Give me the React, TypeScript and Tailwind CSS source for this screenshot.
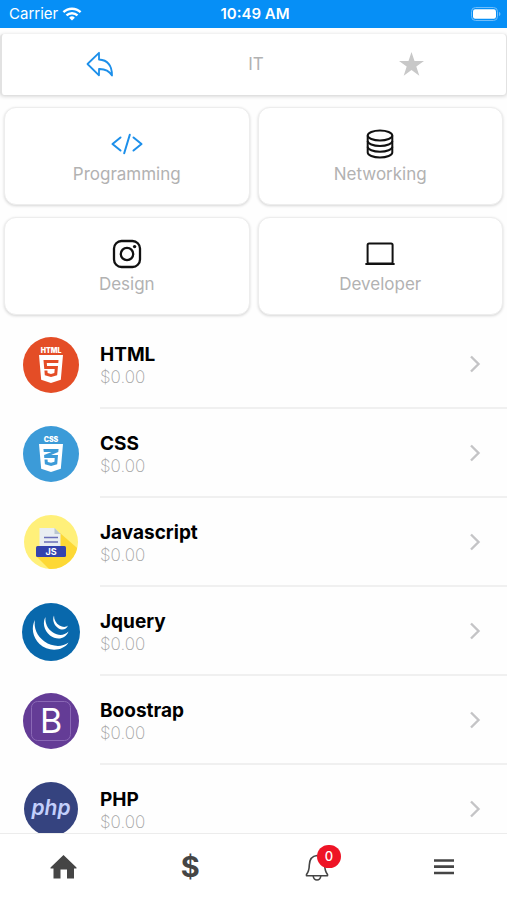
import React from 'react'
import { FaCss3Alt, FaHtml5 } from 'react-icons/fa'

const LOGO_FONT = 'Inter, sans-serif'

function WifiIcon() {
  return (
    <svg viewBox="0 0 20 14" className="w-5 h-3.5" fill="none" stroke="currentColor" strokeWidth="2.4" aria-hidden="true">
      <path d="M1.4 5.2a12.4 12.4 0 0 1 17.2 0" />
      <path d="M4.5 8.4a8 8 0 0 1 11 0" />
      <path d="M10 13.6 7.1 10.7a4.2 4.2 0 0 1 5.8 0Z" fill="currentColor" stroke="none" />
    </svg>
  )
}

function BatteryIcon() {
  return (
    <svg viewBox="0 0 30 14" className="w-[30px] h-3.5" aria-hidden="true">
      <rect x="0.5" y="0.5" width="26" height="13" rx="4" fill="none" stroke="#6fbdfa" />
      <rect x="2" y="2.2" width="23" height="9.600" rx="2.2" fill="#fff" />
      <path d="M28 5v4c1-.4 1.400-1.100 1.400-2s-.4-1.600-1.400-2Z" fill="#6fbdfa" />
    </svg>
  )
}

function CodeIcon() {
  return (
    <svg viewBox="0 0 32 32" className="size-8" fill="none" stroke="#1c8fea" strokeWidth="2" strokeLinecap="round" strokeLinejoin="round" aria-hidden="true">
      <path d="m9.500 9.500-8 6.500 8 6.500" />
      <path d="m22.500 9.500 8 6.500-8 6.500" />
      <path d="m18.800 6.800-5.600 18.400" />
    </svg>
  )
}

function DatabaseIcon() {
  return (
    <svg viewBox="0 0 32 32" className="size-8" fill="none" stroke="#111" strokeWidth="2" aria-hidden="true">
      <ellipse cx="16" cy="7.500" rx="12.300" ry="5" />
      <path d="M3.700 7.500v17c0 2.800 5.500 5 12.300 5s12.300-2.200 12.300-5v-17" />
      <path d="M3.700 13c0 2.800 5.500 5 12.300 5s12.300-2.200 12.300-5" />
      <path d="M3.700 18.700c0 2.800 5.500 5 12.300 5s12.300-2.200 12.300-5" />
    </svg>
  )
}

function CameraIcon() {
  return (
    <svg viewBox="0 0 32 32" className="size-8" fill="none" stroke="#111" strokeWidth="2.300" aria-hidden="true">
      <rect x="3" y="3" width="26" height="26" rx="7.500" />
      <circle cx="16" cy="16" r="6.200" />
      <circle cx="23.600" cy="8.600" r="1.700" fill="#111" stroke="none" />
    </svg>
  )
}

function LaptopIcon() {
  return (
    <svg viewBox="0 0 32 32" className="size-8" fill="none" stroke="#111" strokeWidth="2" strokeLinecap="round" aria-hidden="true">
      <rect x="3.600" y="5.500" width="25" height="20" rx="1.500" />
      <path d="M2.200 26h27.600" strokeWidth="2.200" />
    </svg>
  )
}

function HtmlLogo() {
  return (
    <svg viewBox="0 0 58 58" className="size-[58px]" aria-hidden="true">
      <circle cx="29" cy="29" r="28" fill="#e44d26" />
      <text x="29" y="17" textAnchor="middle" fontFamily={LOGO_FONT} fontWeight="900" fontSize="7" fill="#fff">
        HTML
      </text>
      <FaHtml5 x="13" y="17" size={32} color="#fff" />
    </svg>
  )
}

function CssLogo() {
  return (
    <svg viewBox="0 0 58 58" className="size-[58px]" aria-hidden="true">
      <circle cx="29" cy="29" r="28" fill="#3c9bd8" />
      <text x="29" y="17" textAnchor="middle" fontFamily={LOGO_FONT} fontWeight="900" fontSize="7" fill="#fff">
        CSS
      </text>
      <FaCss3Alt x="13" y="17" size={32} color="#fff" />
    </svg>
  )
}

function JavascriptLogo() {
  return (
    <svg viewBox="0 0 58 58" className="size-[58px]" aria-hidden="true">
      <clipPath id="js-disc">
        <circle cx="29" cy="28" r="27" />
      </clipPath>
      <g clipPath="url(#js-disc)">
        <rect width="58" height="58" fill="#fff07a" />
        <path d="M38 19 62 40v20H32L14 42Z" fill="#fdd835" />
      </g>
      <path d="M17.500 14h15l6 6v14h-21Z" fill="#e9eef2" />
      <path d="m32.500 14 6 6h-6Z" fill="#b9c6cf" />
      <path d="M22 23.500h14M22 28h14" stroke="#6a6fb8" strokeWidth="1.600" />
      <rect x="14" y="32" width="30" height="11" rx="1.500" fill="#3443ae" />
      <text x="29" y="41" textAnchor="middle" fontFamily={LOGO_FONT} fontWeight="700" fontSize="9" fill="#fff">
        JS
      </text>
    </svg>
  )
}

function JqueryLogo() {
  return (
    <svg viewBox="0 0 58 58" className="size-[58px]" aria-hidden="true">
      <circle cx="29" cy="29" r="29" fill="#0868ac" />
      <g fill="#fff">
        <path d="M13 17C9 24 10.500 34 17.500 41C26 49 41 48.500 46.500 39.500C40 44.500 30 43.800 22.500 38.500C15 33 11.500 25 13 17Z" />
        <path d="M23.500 14C20.500 19 21.500 27 28 32.500C34.500 37.500 43.500 36.500 46.500 28.500C42 33 36 32.800 31 29.500C25.500 26 22.800 20 23.500 14Z" />
        <path d="M32 12.500C30 17 32 22 36 25C40 27.800 44.500 26.500 46 22.500C43.500 24.600 40.500 24.200 37.500 22.500C34 20.300 32 17 32 12.500Z" />
      </g>
    </svg>
  )
}

function BootstrapLogo() {
  return (
    <svg viewBox="0 0 58 58" className="size-[58px]" aria-hidden="true">
      <circle cx="29" cy="29" r="28" fill="#643c96" />
      <rect x="9.500" y="9.500" width="39" height="39" rx="6" fill="none" stroke="#8a68b5" />
      <text x="29" y="41" textAnchor="middle" fontFamily={LOGO_FONT} fontWeight="400" fontSize="34" fill="#fff">
        B
      </text>
    </svg>
  )
}

function PhpLogo() {
  return (
    <svg viewBox="0 0 58 58" className="size-[58px]" aria-hidden="true">
      <circle cx="29" cy="28" r="27" fill="#35437f" />
      <text x="29" y="34" textAnchor="middle" fontFamily={LOGO_FONT} fontWeight="600" fontStyle="italic" fontSize="21" fill="#c3cffb">
        php
      </text>
    </svg>
  )
}

const categories = [
  { label: 'Programming', icon: <CodeIcon /> },
  { label: 'Networking', icon: <DatabaseIcon /> },
  { label: 'Design', icon: <CameraIcon /> },
  { label: 'Developer', icon: <LaptopIcon /> },
]

const courses = [
  { name: 'HTML', price: '$0.00', logo: <HtmlLogo /> },
  { name: 'CSS', price: '$0.00', logo: <CssLogo /> },
  { name: 'Javascript', price: '$0.00', logo: <JavascriptLogo /> },
  { name: 'Jquery', price: '$0.00', logo: <JqueryLogo /> },
  { name: 'Boostrap', price: '$0.00', logo: <BootstrapLogo /> },
  { name: 'PHP', price: '$0.00', logo: <PhpLogo /> },
]

function StatusBar() {
  return (
    <div className="grid grid-cols-3 items-center h-7 shrink-0 pl-[9px] pr-1.5 bg-[#068ff6] text-white text-[15px] leading-5">
      <div className="flex items-center gap-1">
        <span>Carrier</span>
        <WifiIcon />
      </div>
      <span className="text-center font-semibold">10:49 AM</span>
      <div className="flex justify-end">
        <BatteryIcon />
      </div>
    </div>
  )
}

function Header() {
  return (
    <header className="grid grid-cols-3 items-center justify-items-center h-[61px] mt-1.5 pl-5 pr-4 pb-0.5 rounded-sm bg-white border-l-2 border-r border-[#e2e2e2] shadow-[0_1px_4px_rgba(0,0,0,0.2)]">
      <button aria-label="Back" className="cursor-pointer">
        <svg viewBox="0 0 28 28" className="size-7" fill="none" stroke="#1c8fea" strokeWidth="1.800" strokeLinejoin="round" aria-hidden="true">
          <path d="M1.500 14 13 2.800V9.500C21.500 10 26 15 26 25.500C23 20.500 19 18.800 13 19V25.300Z" />
        </svg>
      </button>
      <h1 className="text-[17px] leading-6 text-[#b2b2b2]">IT</h1>
      <button aria-label="Favorite" className="cursor-pointer">
        <svg viewBox="0 0 28 28" className="size-7" fill="#c8c8c8" aria-hidden="true">
          <path d="m13.500 2 3 9h9.500l-7.700 5.600 3 9.100-7.800-5.600-7.800 5.600 3-9.100L1 11h9.500Z" />
        </svg>
      </button>
    </header>
  )
}

function TabBar() {
  return (
    <nav className="grid grid-cols-4 items-center justify-items-center h-[67px] shrink-0 bg-white border-t border-[#ececec] text-[#454545]">
      <button aria-label="Home" className="cursor-pointer">
        <svg viewBox="0 0 28 28" className="size-7" fill="currentColor" aria-hidden="true">
          <path d="M14.500 2 27.500 14.500V15.500H25V25.500H18V16.500H11.500V25.500H4.500V15.500H1.500V14.500Z" />
        </svg>
      </button>
      <button className="cursor-pointer text-[29px] leading-8 font-bold">$</button>
      <button aria-label="Notifications" className="relative cursor-pointer">
        <svg viewBox="0 0 28 28" className="size-7" fill="none" stroke="currentColor" strokeWidth="1.600" strokeLinejoin="round" aria-hidden="true">
          <path d="M14 2.500C8.500 3 6.500 7 6.300 12C6.200 17 5.500 19 3.500 21.500V22.800H24.500V21.500C22.500 19 21.800 17 21.700 12C21.500 7 19.500 3 14 2.500Z" />
          <path d="M10.200 23c.4 2.800 1.800 4 3.800 4s3.400-1.200 3.800-4" />
        </svg>
        <span className="absolute -top-2 left-3.5 flex items-center justify-center w-6 h-[23px] rounded-full bg-[#ee1426] text-white text-[13px] font-medium">
          0
        </span>
      </button>
      <button aria-label="Menu" className="cursor-pointer">
        <svg viewBox="0 0 28 28" className="size-7" stroke="currentColor" strokeWidth="2.700" aria-hidden="true">
          <path d="M4 7.500h20M4 13.700h20M4 20h20" />
        </svg>
      </button>
    </nav>
  )
}

export default function App() {
  return (
    <div className="flex flex-col h-screen bg-[#fefefe] font-[Inter,sans-serif]">
      <StatusBar />

      <main className="flex-1 min-h-0 overflow-y-auto [scrollbar-width:none]">
        <Header />

        {/* Categories */}
        <div className="grid grid-cols-2 gap-x-2 gap-y-3 mt-3 px-1">
          {categories.map((category) => (
            <button
              key={category.label}
              className="flex flex-col items-center justify-center h-[98px] pt-1 rounded-xl bg-white border border-[#ededed] shadow-[0_1px_3px_rgba(0,0,0,0.16)] cursor-pointer"
            >
              {category.icon}
              <span className="text-[17px] leading-7 text-[#b2b2b2]">
                {category.label}
              </span>
            </button>
          ))}
        </div>

        {/* Courses */}
        <ul className="mt-[5px]">
          {courses.map((course) => (
            <li key={course.name}>
              <a href="#" className="flex items-stretch gap-5 h-[89px] pl-[22px]">
                <span className="flex items-center shrink-0">{course.logo}</span>
                <span className="flex flex-1 items-center justify-between pr-[22px] border-b-2 border-[#f0f0f0]">
                  <span className="flex flex-col pt-0.5">
                    <span className="text-[19px] leading-6 font-bold text-black">
                      {course.name}
                    </span>
                    <span className="text-[17px] leading-5 font-extralight text-[#a4a4a4]">
                      {course.price}
                    </span>
                  </span>
                  <svg viewBox="0 0 20 20" className="size-5" fill="none" stroke="#c4c4c6" strokeWidth="2.400" aria-hidden="true">
                    <path d="m6 2.500 7.500 7.500L6 17.500" />
                  </svg>
                </span>
              </a>
            </li>
          ))}
        </ul>
      </main>

      <TabBar />
    </div>
  )
}
